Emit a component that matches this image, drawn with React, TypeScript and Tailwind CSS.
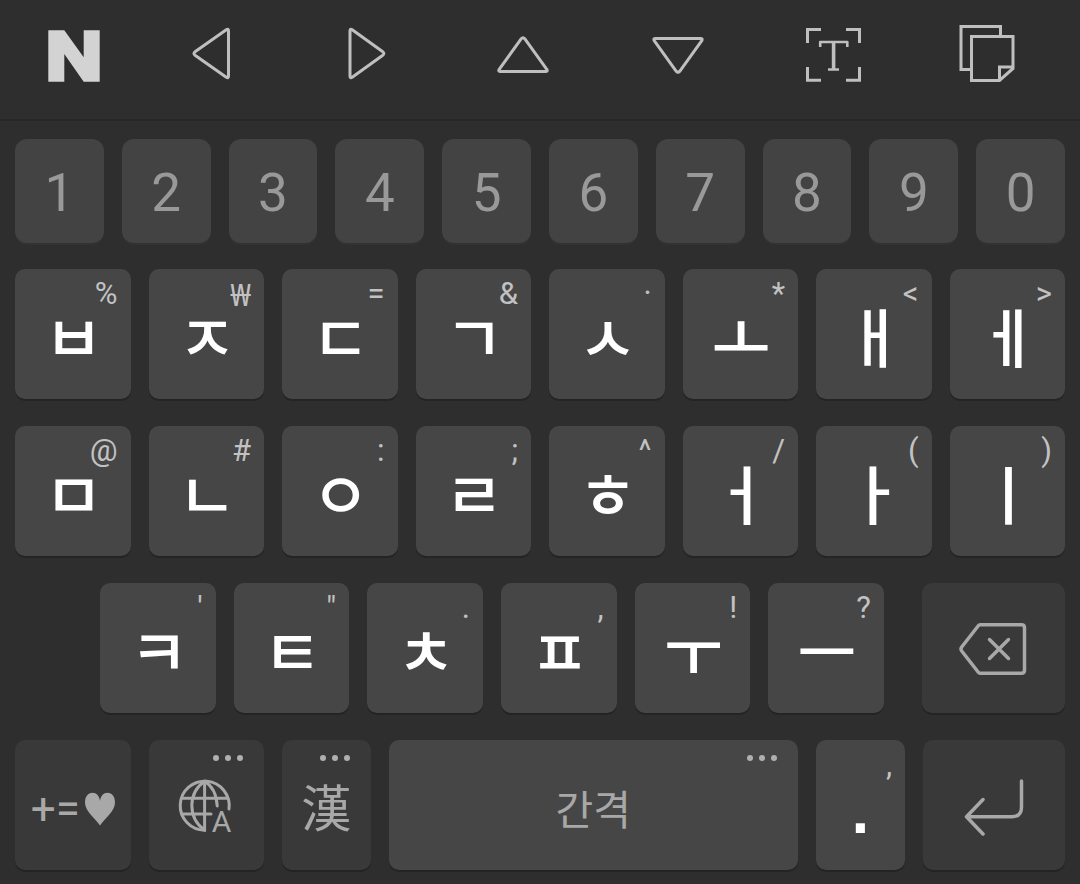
import type { ReactNode } from "react";

type Key = { label: string; hint: string };

const digits = ["1", "2", "3", "4", "5", "6", "7", "8", "9", "0"];

const topRow: Key[] = [
  { label: "ㅂ", hint: "%" },
  { label: "ㅈ", hint: "₩" },
  { label: "ㄷ", hint: "=" },
  { label: "ㄱ", hint: "&" },
  { label: "ㅅ", hint: "·" },
  { label: "ㅗ", hint: "*" },
  { label: "ㅐ", hint: "<" },
  { label: "ㅔ", hint: ">" },
];

const homeRow: Key[] = [
  { label: "ㅁ", hint: "@" },
  { label: "ㄴ", hint: "#" },
  { label: "ㅇ", hint: ":" },
  { label: "ㄹ", hint: ";" },
  { label: "ㅎ", hint: "^" },
  { label: "ㅓ", hint: "/" },
  { label: "ㅏ", hint: "(" },
  { label: "ㅣ", hint: ")" },
];

const bottomRow: Key[] = [
  { label: "ㅋ", hint: "'" },
  { label: "ㅌ", hint: '"' },
  { label: "ㅊ", hint: "." },
  { label: "ㅍ", hint: "," },
  { label: "ㅜ", hint: "!" },
  { label: "ㅡ", hint: "?" },
];

const keyBase =
  "relative flex h-[130px] min-w-0 basis-0 items-center justify-center rounded-[10px] shadow-[0_2px_0_#242424]";
const light = "bg-[#464646]";
const dark = "bg-[#393939] text-[#a8a8a8]";

function Hint({ children }: { children: ReactNode }) {
  const family =
    children === "₩" ? "font-['Noto_Sans',sans-serif]" : "font-['Roboto',sans-serif]";
  return (
    <span
      className={`${family} absolute top-[7px] right-[13px] text-[31px] leading-[36px] text-[#c2c2c2]`}
    >
      {children}
    </span>
  );
}

function Dots() {
  return (
    <span className="absolute top-[15px] right-[21px] flex gap-[6px]" aria-hidden="true">
      <i className="size-[6px] rounded-full bg-[#b0b0b0]" />
      <i className="size-[6px] rounded-full bg-[#b0b0b0]" />
      <i className="size-[6px] rounded-full bg-[#b0b0b0]" />
    </span>
  );
}

function LetterKey({ label, hint }: Key) {
  return (
    <button type="button" className={`${keyBase} ${light} grow-[231]`}>
      <span className="pl-[2px] font-['Noto_Sans_CJK_KR',sans-serif] text-[64px] leading-[64px] font-medium text-white">
        {label}
      </span>
      <Hint>{hint}</Hint>
    </button>
  );
}

function Tool({ label, children }: { label: string; children: ReactNode }) {
  return (
    <button type="button" aria-label={label} className="flex flex-1 justify-center">
      <svg
        viewBox="0 0 64 64"
        className="size-16"
        fill="none"
        stroke="#bfbfbf"
        strokeWidth="3"
        strokeLinejoin="round"
      >
        {children}
      </svg>
    </button>
  );
}

export default function App() {
  return (
    <main className="min-h-screen bg-[#2e2e2e] font-['Roboto','Noto_Sans_CJK_KR',sans-serif]">
      <header className="flex h-[121px] items-center border-b-2 border-[#272727] pr-[13px] pb-[11px] pl-[42px]">
        <button type="button" aria-label="NAVER" className="mr-7">
          <svg viewBox="0 0 64 64" className="size-16">
            <path
              d="M6.300 8.300H22.300L41.700 35.300V8.300H57.700V59.700H41.700L22.300 32V59.700H6.300Z"
              fill="#d3d3d3"
            />
          </svg>
        </button>
        <Tool label="Left">
          <path d="M15 33.2Q12.900 31.5 15 29.8L46.300 7.700Q48.500 6.300 48.500 9V54Q48.500 56.700 46.300 55.300Z" />
        </Tool>
        <Tool label="Right">
          <path d="M47.800 33.2Q49.900 31.5 47.800 29.8L17.200 7.700Q15 6.300 15 9V54Q15 56.700 17.200 55.300Z" />
        </Tool>
        <Tool label="Up">
          <path d="M30.300 16.700Q32 14.600 33.700 16.700L55.800 47.300Q57 49.500 54.500 49.500H9.500Q7 49.500 8.200 47.300Z" />
        </Tool>
        <Tool label="Down">
          <path d="M30.300 49.300Q32 51.400 33.700 49.300L55.800 18.700Q57 16.500 54.500 16.500H9.500Q7 16.500 8.200 18.700Z" />
        </Tool>
        <Tool label="Select text">
          <path
            d="M19 7.500H5.500V21M44 7.500H57.500V21M19 58.300H5.500V45M44 58.300H57.500V45"
            strokeLinejoin="miter"
          />
          <path d="M18.200 25V20H45.300V25M26 47.500H37" strokeWidth="2.600" />
          <path d="M31.600 20V47.500" strokeWidth="3.600" />
        </Tool>
        <Tool label="Clipboard">
          <g strokeLinejoin="miter">
            <path d="M14.500 47.400H4V4.500H43.500V14.500" />
            <path d="M56 14.500H14.500V58.400H42.500L56 46.500Z" />
            <path d="M42.500 58.400V45H56" />
          </g>
        </Tool>
      </header>

      <div className="flex flex-col gap-[27px] px-[15px] pt-[18px] pb-[14px]">
        <div className="-mb-px flex gap-[18px]">
          {digits.map((d) => (
            <button
              key={d}
              type="button"
              className="flex h-[104px] min-w-0 flex-1 items-center justify-center rounded-[12px] bg-[#434343] pt-[3px] text-[53px] leading-[64px] text-[#999999] shadow-[0_2px_0_#323232]"
            >
              {d}
            </button>
          ))}
        </div>

        <div className="flex gap-[18px]">
          {topRow.map((k) => (
            <LetterKey key={k.label} {...k} />
          ))}
        </div>

        <div className="flex gap-[18px]">
          {homeRow.map((k) => (
            <LetterKey key={k.label} {...k} />
          ))}
        </div>

        <div className="flex gap-[18px] pl-[85px]">
          {bottomRow.map((k) => (
            <LetterKey key={k.label} {...k} />
          ))}
          <button
            type="button"
            aria-label="Backspace"
            className={`${keyBase} ${dark} ml-5 grow-[286]`}
          >
            <svg
              viewBox="0 0 72 72"
              className="size-[72px]"
              fill="none"
              stroke="currentColor"
              strokeWidth="3.500"
              strokeLinecap="round"
              strokeLinejoin="round"
            >
              <path d="M21.500 13.500Q22.400 12.700 23.500 12.700H64.500Q67.500 12.700 67.500 15.700V58.300Q67.500 61.300 64.500 61.300H23.500Q22.400 61.300 21.500 60.500L4.700 39Q3.300 37 4.700 35Z" />
              <path d="M32.500 27.500L51.500 46.500M51.500 27.500L32.500 46.500" />
            </svg>
          </button>
        </div>

        <div className="flex gap-[18px]">
          <button
            type="button"
            aria-label="Symbols and emoji"
            className={`${keyBase} ${dark} grow-[231] gap-[5px] pt-[8px]`}
          >
            <span className="text-[44px] leading-[52px]">+=</span>
            <svg viewBox="0 0 30 34" className="h-[34px] w-[30px]" fill="currentColor">
              <path d="M15 33.500C10 26 0 19.500 0 10.500C0 4.500 3 .700 7.500 .700C11.500 .700 14.500 4 15 9C15.500 4 18.500 .700 22.500 .700C27 .700 30 4.500 30 10.500C30 19.500 20 26 15 33.500Z" />
            </svg>
          </button>
          <button
            type="button"
            aria-label="Language"
            className={`${keyBase} ${dark} grow-[231]`}
          >
            <svg
              viewBox="0 0 64 64"
              className="size-16 overflow-visible"
              fill="none"
              stroke="currentColor"
              strokeWidth="3"
              strokeLinecap="round"
            >
              <path d="M55 36A24.500 24.500 0 1 0 30.600 57.200V8.200" />
              <path d="M30.600 8.200C13.600 20 13.600 45 30.600 57.200M30.600 8.200C38.600 13 42.600 22 43.200 33M8.600 25.300H52.600M8.100 41H37" />
              <text
                x="47.600"
                y="58.500"
                textAnchor="middle"
                fontSize="30"
                fontFamily="Roboto, sans-serif"
                fill="currentColor"
                stroke="none"
              >
                A
              </text>
            </svg>
            <Dots />
          </button>
          <button type="button" className={`${keyBase} ${dark} grow-[177]`}>
            <span className="font-['Noto_Sans_CJK_KR',sans-serif] text-[50px] leading-[64px]">
              漢
            </span>
            <Dots />
          </button>
          <button
            type="button"
            className={`${keyBase} bg-[#464646] text-[#a8a8a8] grow-[819]`}
          >
            <span className="pt-[3px] font-['Noto_Sans_CJK_KR',sans-serif] text-[41px] leading-[64px]">
              간격
            </span>
            <Dots />
          </button>
          <button type="button" className={`${keyBase} ${light} grow-[178]`}>
            <span className="pt-[12px] font-['Liberation_Sans',sans-serif] text-[64px] leading-[64px] font-bold text-white">
              .
            </span>
            <Hint>,</Hint>
          </button>
          <button
            type="button"
            aria-label="Enter"
            className={`${keyBase} ${dark} grow-[284]`}
          >
            <svg
              viewBox="0 0 72 72"
              className="size-[72px]"
              fill="none"
              stroke="currentColor"
              strokeWidth="3.500"
              strokeLinecap="round"
              strokeLinejoin="round"
            >
              <path d="M63.500 12V38Q63.500 47.700 54 47.700H8.500M25 30.500L8.500 47.700L25 65" />
            </svg>
          </button>
        </div>
      </div>
    </main>
  );
}
